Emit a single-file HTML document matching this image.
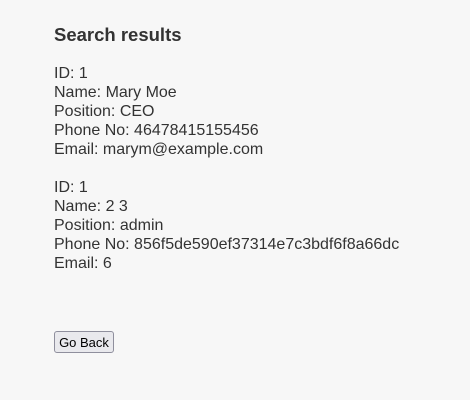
<!DOCTYPE html>
<html><head><style>
body{margin:0;background:#f7f7f7;font-family:"Liberation Sans",sans-serif;color:#333;}
.w{position:absolute;left:54px;top:0;}
h3{position:absolute;top:24px;left:0;margin:0;font-size:18.5px;font-weight:bold;white-space:nowrap;}
.b{position:absolute;left:0;font-size:16px;line-height:19px;white-space:nowrap;}
button{position:absolute;left:54px;top:331px;width:60px;height:22px;padding:0;font-family:"Liberation Sans",sans-serif;font-size:13px;color:#000;background:#e9e9ed;border:1px solid #8f8f9d;border-radius:3px;}
</style></head><body>
<div class="w">
<h3>Search results</h3>
<div class="b" style="top:64px">ID: 1<br>Name: Mary Moe<br>Position: CEO<br>Phone No: 46478415155456<br>Email: marym@example.com</div>
<div class="b" style="top:178px">ID: 1<br>Name: 2 3<br>Position: admin<br>Phone No: 856f5de590ef37314e7c3bdf6f8a66dc<br>Email: 6</div>
</div>
<button>Go Back</button>
</body></html>
